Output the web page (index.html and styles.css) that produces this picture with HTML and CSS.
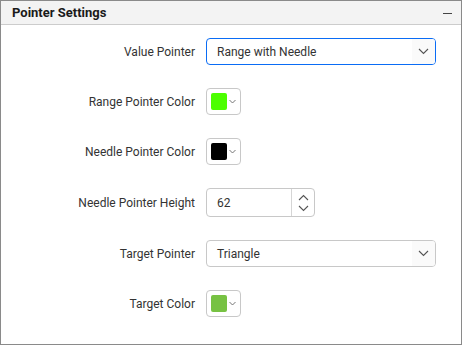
FILE: index.html
```html
<!DOCTYPE html>
<html lang="en">
<head>
  <meta charset="UTF-8">
  <title>Pointer Settings</title>
  <link rel="stylesheet" href="styles.css">
</head>
<body>
  <div class="panel">
    <div class="panel-header">
      <span class="panel-title">Pointer Settings</span>
      <span class="collapse-icon"></span>
    </div>
    <div class="settings">
      <label class="label">Value Pointer</label>
      <div class="dropdown active">
        <span class="dropdown-text">Range with Needle</span>
        <span class="dropdown-arrow">
          <svg width="11" height="7" viewBox="0 0 11 7"><path d="M1 1l4.5 4.5L10 1" fill="none" stroke="#555" stroke-width="1.1"/></svg>
        </span>
      </div>

      <label class="label">Range Pointer Color</label>
      <div class="color-pick">
        <span class="swatch" style="background:#4cff00"></span>
        <svg width="7" height="5" viewBox="0 0 7 5"><path d="M0.5 1l3 3 3-3" fill="none" stroke="#666" stroke-width="0.9"/></svg>
      </div>

      <label class="label">Needle Pointer Color</label>
      <div class="color-pick">
        <span class="swatch" style="background:#000000"></span>
        <svg width="7" height="5" viewBox="0 0 7 5"><path d="M0.5 1l3 3 3-3" fill="none" stroke="#666" stroke-width="0.9"/></svg>
      </div>

      <label class="label">Needle Pointer Height</label>
      <div class="numeric">
        <span class="numeric-value">62</span>
        <span class="spinner">
          <svg width="11" height="7" viewBox="0 0 11 7"><path d="M1 6l4.5-4.5L10 6" fill="none" stroke="#555" stroke-width="1.1"/></svg>
          <svg width="11" height="7" viewBox="0 0 11 7"><path d="M1 1l4.5 4.5L10 1" fill="none" stroke="#555" stroke-width="1.1"/></svg>
        </span>
      </div>

      <label class="label">Target Pointer</label>
      <div class="dropdown">
        <span class="dropdown-text">Triangle</span>
        <span class="dropdown-arrow">
          <svg width="11" height="7" viewBox="0 0 11 7"><path d="M1 1l4.5 4.5L10 1" fill="none" stroke="#555" stroke-width="1.1"/></svg>
        </span>
      </div>

      <label class="label">Target Color</label>
      <div class="color-pick">
        <span class="swatch" style="background:#77c243"></span>
        <svg width="7" height="5" viewBox="0 0 7 5"><path d="M0.5 1l3 3 3-3" fill="none" stroke="#666" stroke-width="0.9"/></svg>
      </div>
    </div>
  </div>
</body>
</html>
```

FILE: styles.css
```css
/* Panel */
* {
  box-sizing: border-box;
}
body {
  margin: 0;
  font-family: Roboto, "Liberation Sans", sans-serif;
  font-size: 12px;
  color: #333;
  background: #fff;
}
.panel {
  width: 462px;
  height: 345px;
  border: 1px solid #8a8a8a;
}
.panel-header {
  height: 24px;
  background: #f3f3f3;
  border-bottom: 1px solid #cccccc;
  display: flex;
  align-items: center;
  justify-content: space-between;
  padding: 0 9px 0 11px;
}
.panel-title {
  font-size: 13px;
  font-weight: bold;
  color: #1a1a1a;
}
.collapse-icon {
  width: 9px;
  height: 1px;
  border-top: 1.5px solid #444;
  margin-top: 1px;
}

/* Settings grid */
.settings {
  display: grid;
  grid-template-columns: 194px 230px;
  column-gap: 11px;
  row-gap: 23px;
  padding-top: 13px;
  align-items: center;
}
.label {
  text-align: right;
  color: #333;
}
.dropdown {
  height: 27px;
  border: 1px solid #c8c8c8;
  border-radius: 4px;
  display: flex;
  align-items: center;
  justify-content: space-between;
  overflow: hidden;
}
.dropdown.active {
  border-color: #0a6cf5;
}
.dropdown-text {
  padding-left: 10px;
}
.dropdown-arrow {
  width: 23px;
  height: 100%;
  background: #fafafa;
  display: flex;
  align-items: center;
  justify-content: center;
}
.color-pick {
  width: 35px;
  height: 27px;
  border: 1px solid #c8c8c8;
  border-radius: 4px;
  display: flex;
  align-items: center;
  padding-left: 4px;
  gap: 2px;
}
.swatch {
  width: 16px;
  height: 17px;
  border-radius: 2px;
}
.numeric {
  width: 109px;
  height: 29px;
  border: 1px solid #c8c8c8;
  border-radius: 4px;
  display: flex;
  align-items: center;
}
.numeric-value {
  flex: 1;
  padding-left: 10px;
}
.spinner {
  width: 23px;
  height: 100%;
  border-left: 1px solid #d5d5d5;
  display: flex;
  flex-direction: column;
  align-items: center;
  justify-content: center;
  gap: 4px;
}
```
